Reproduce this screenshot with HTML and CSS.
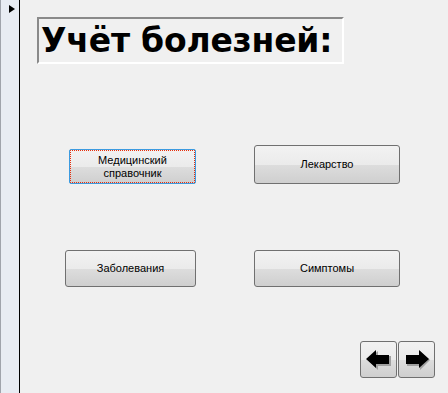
FILE: index.html
```html
<!DOCTYPE html>
<html lang="ru">
<head>
<meta charset="utf-8">
<title>Учёт болезней</title>
<link rel="stylesheet" href="styles.css">
</head>
<body>
<div class="app">
  <div class="selector">
    <svg class="rec" width="6" height="8" viewBox="0 0 6 8"><polygon points="0,0 6,4 0,8" fill="#000"/></svg>
  </div>
  <div class="main">
    <div class="title">Учёт болезней:</div>
    <div class="row row1">
      <button class="btn btn-med focus">Медицинский<br>справочник</button>
      <button class="btn btn-lek">Лекарство</button>
    </div>
    <div class="row row2">
      <button class="btn btn-zab">Заболевания</button>
      <button class="btn btn-sim">Симптомы</button>
    </div>
    <div class="nav">
      <button class="btn nav-btn" aria-label="Назад">
        <svg width="28" height="24" viewBox="0 0 28 24">
          <polygon points="3,12 13,3 13,8 26,8 26,18 13,18 13,22" fill="#a0a0a0"/>
          <polygon points="1,11 11,2 11,7 24,7 24,16 11,16 11,20" fill="#000"/>
        </svg>
      </button>
      <button class="btn nav-btn" aria-label="Вперёд">
        <svg width="28" height="24" viewBox="0 0 28 24">
          <polygon points="4,8 17,8 17,3 27,12 17,22 17,18 4,18" fill="#a0a0a0"/>
          <polygon points="3,7 16,7 16,2 26,11 16,20 16,16 3,16" fill="#000"/>
        </svg>
      </button>
    </div>
  </div>
</div>
</body>
</html>
```
FILE: styles.css
```css
html, body {
  margin: 0;
  padding: 0;
}
body {
  width: 448px;
  height: 393px;
  overflow: hidden;
  background: #f0f0f0;
  font-family: "Liberation Sans", Arial, sans-serif;
}
.app {
  display: flex;
  height: 393px;
}
.selector {
  width: 18px;
  flex: none;
  background: #e8ecf3;
  border-left: 1px solid #a0a4ac;
  border-right: 1px solid #000;
  box-sizing: content-box;
  padding-top: 5px;
}
.rec {
  display: block;
  margin-left: 8px;
}
.main {
  flex: 1;
  display: flex;
  flex-direction: column;
}
.title {
  margin-top: 17px;
  margin-left: 17px;
  width: 301px;
  height: 43px;
  border-top: 2px solid #8a8a8a;
  border-left: 2px solid #8a8a8a;
  border-right: 2px solid #ffffff;
  border-bottom: 2px solid #ffffff;
  font-family: "DejaVu Sans", Verdana, sans-serif;
  font-weight: bold;
  font-size: 33px;
  line-height: 43px;
  letter-spacing: -0.2px;
  padding-left: 2px;
  box-sizing: content-box;
  color: #000;
  white-space: nowrap;
}
.row {
  display: flex;
  gap: 58px;
}
.row1 {
  margin-top: 81px;
  padding-left: 49px;
  align-items: flex-end;
}
.row2 {
  margin-top: 66px;
  padding-left: 45px;
}
.btn {
  box-sizing: border-box;
  margin: 0;
  padding: 0;
  border: 1px solid #707070;
  border-radius: 3px;
  background: linear-gradient(#f2f2f2 0%, #ebebeb 50%, #dddddd 51%, #cfcfcf 100%);
  font-family: "Liberation Sans", Arial, sans-serif;
  font-size: 11px;
  line-height: 13px;
  color: #000;
  text-align: center;
}
.btn-med { width: 127px; height: 35px; }
.btn-lek { width: 146px; height: 39px; }
.btn-zab { width: 131px; height: 37px; }
.btn-sim { width: 146px; height: 37px; }
.focus {
  border: 1px solid #3c9be0;
  border-radius: 2px;
  outline: 1px dotted #e8300c;
  outline-offset: -2px;
  padding-top: 1px;
}
.nav {
  display: flex;
  justify-content: flex-end;
  gap: 1px;
  margin-top: 54px;
  padding-right: 13px;
}
.nav-btn {
  width: 37px;
  height: 37px;
  display: flex;
  align-items: center;
  justify-content: center;
}
.nav-btn svg {
  display: block;
}
```
